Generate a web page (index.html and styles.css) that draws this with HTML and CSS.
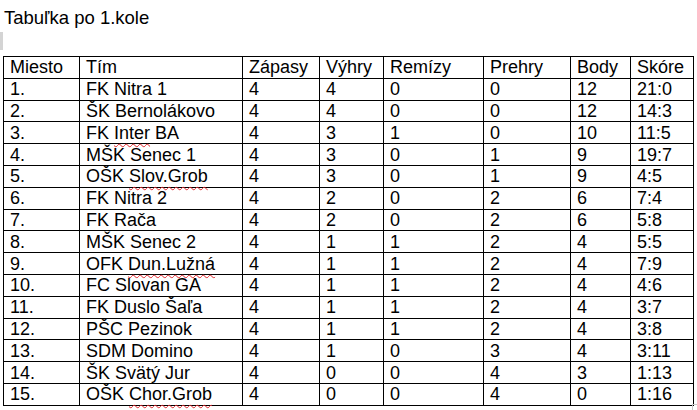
FILE: index.html
```html
<!DOCTYPE html>
<html lang="sk">
<head>
<meta charset="utf-8">
<link rel="stylesheet" href="styles.css">
</head>
<body>
<div class="page">
  <div class="title">Tabuľka po 1.kole</div>
  <div class="marker"></div>
  <table class="standings">
    <colgroup>
      <col class="c-pos"><col class="c-team"><col class="c-z"><col class="c-v"><col class="c-r"><col class="c-p"><col class="c-b"><col class="c-s">
    </colgroup>
    <tr><td>Miesto</td><td>Tím</td><td>Zápasy</td><td>Výhry</td><td>Remízy</td><td>Prehry</td><td>Body</td><td>Skóre</td></tr>
    <tr><td>1.</td><td>FK Nitra 1</td><td>4</td><td>4</td><td>0</td><td>0</td><td>12</td><td>21:0</td></tr>
    <tr><td>2.</td><td>ŠK Bernolákovo</td><td>4</td><td>4</td><td>0</td><td>0</td><td>12</td><td>14:3</td></tr>
    <tr><td>3.</td><td>FK <span class="sq">Inter</span> BA</td><td>4</td><td>3</td><td>1</td><td>0</td><td>10</td><td>11:5</td></tr>
    <tr><td>4.</td><td>MŠK Senec 1</td><td>4</td><td>3</td><td>0</td><td>1</td><td>9</td><td>19:7</td></tr>
    <tr><td>5.</td><td>OŠK <span class="sq">Slov.Grob</span></td><td>4</td><td>3</td><td>0</td><td>1</td><td>9</td><td>4:5</td></tr>
    <tr><td>6.</td><td>FK Nitra 2</td><td>4</td><td>2</td><td>0</td><td>2</td><td>6</td><td>7:4</td></tr>
    <tr><td>7.</td><td>FK Rača</td><td>4</td><td>2</td><td>0</td><td>2</td><td>6</td><td>5:8</td></tr>
    <tr><td>8.</td><td>MŠK Senec 2</td><td>4</td><td>1</td><td>1</td><td>2</td><td>4</td><td>5:5</td></tr>
    <tr><td>9.</td><td>OFK <span class="sq">Dun.Lužná</span></td><td>4</td><td>1</td><td>1</td><td>2</td><td>4</td><td>7:9</td></tr>
    <tr><td>10.</td><td>FC Slovan GA</td><td>4</td><td>1</td><td>1</td><td>2</td><td>4</td><td>4:6</td></tr>
    <tr><td>11.</td><td>FK Duslo Šaľa</td><td>4</td><td>1</td><td>1</td><td>2</td><td>4</td><td>3:7</td></tr>
    <tr><td>12.</td><td>PŠC Pezinok</td><td>4</td><td>1</td><td>1</td><td>2</td><td>4</td><td>3:8</td></tr>
    <tr><td>13.</td><td>SDM Domino</td><td>4</td><td>1</td><td>0</td><td>3</td><td>4</td><td>3:11</td></tr>
    <tr><td>14.</td><td>ŠK Svätý Jur</td><td>4</td><td>0</td><td>0</td><td>4</td><td>3</td><td>1:13</td></tr>
    <tr><td>15.</td><td>OŠK <span class="sq">Chor.Grob</span></td><td>4</td><td>0</td><td>0</td><td>4</td><td>0</td><td>1:16</td></tr>
  </table>
  <div class="corner"></div>
</div>
</body>
</html>
```

FILE: styles.css
```css
html, body {
  margin: 0;
  padding: 0;
  background: #ffffff;
}
body {
  font-family: "Liberation Sans", Arial, sans-serif;
  font-size: 18px;
  color: #000000;
}
.page {
  width: 697px;
  height: 410px;
  overflow: hidden;
  position: relative;
}
.title {
  padding: 8px 0 0 4px;
  font-size: 18.5px;
  line-height: 20px;
  height: 20px;
}
.marker {
  width: 3px;
  height: 18px;
  margin-top: 4px;
  background: #d4d4d4;
}
.standings {
  margin: 6px 0 0 3px;
  border-collapse: collapse;
  table-layout: fixed;
  width: 690px;
}
.standings td {
  border: 1px solid #000000;
  padding: 1px 0 0 6px;
  height: 19.8px;
  line-height: 19px;
  white-space: nowrap;
  vertical-align: middle;
}
.c-pos { width: 76px; }
.c-team { width: 163px; }
.c-z { width: 77px; }
.c-v { width: 64px; }
.c-r { width: 100px; }
.c-p { width: 87px; }
.c-b { width: 60px; }
.c-s { width: 63px; }
.sq {
  text-decoration: underline wavy #e0262b;
  text-decoration-thickness: 1px;
  text-underline-offset: 4px;
  text-decoration-skip-ink: none;
}
.corner {
  position: absolute;
  left: 692px;
  top: 404px;
  width: 5px;
  height: 6px;
  border-left: 1px solid #c8c8c8;
  border-top: 1px solid #c8c8c8;
}
```
